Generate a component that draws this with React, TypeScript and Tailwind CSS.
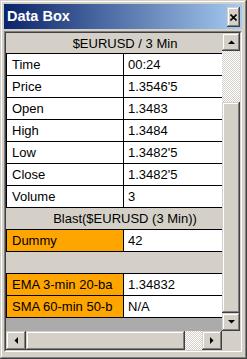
import type { ReactNode } from 'react';

const raised =
  'bg-[#d4d0c8] shadow-[inset_-1px_-1px_0_#404040,inset_1px_1px_0_#d4d0c8,inset_-2px_-2px_0_#808080,inset_2px_2px_0_#ffffff]';
const checker =
  'bg-[repeating-conic-gradient(#d4d0c8_0_25%,#ffffff_0_50%)] bg-[length:2px_2px]';

type Linha = { label: string; value: string; hl?: boolean };

const barra: Linha[] = [
  { label: 'Time', value: '00:24' },
  { label: 'Price', value: "1.3546'5" },
  { label: 'Open', value: '1.3483' },
  { label: 'High', value: '1.3484' },
  { label: 'Low', value: "1.3482'5" },
  { label: 'Close', value: "1.3482'5" },
  { label: 'Volume', value: '3' },
];

const Row = ({ label, value, hl }: Linha) => (
  <div className="flex h-[22px] shrink-0 border-t border-black">
    <div
      className={`flex w-[117px] shrink-0 items-center border-l border-black pl-[5px] ${hl ? 'bg-[#ffa500]' : 'bg-white'}`}
    >
      {label}
    </div>
    <div className="flex flex-1 items-center border-l border-black bg-white pl-[4px]">{value}</div>
  </div>
);

const Header = ({ children, top }: { children: ReactNode; top?: boolean }) => (
  <div
    className={`flex shrink-0 items-center justify-center bg-[#d4d0c8] pl-[22px] ${top ? 'h-[20px]' : 'h-[22px] border-t border-black'}`}
  >
    {children}
  </div>
);

const Arrow = ({ dir }: { dir: 'up' | 'down' | 'left' | 'right' }) => {
  const pts = {
    up: '0,4 7,4 3.5,0.5',
    down: '0,0 7,0 3.5,3.5',
    left: '4,0 4,7 0.5,3.5',
    right: '0,0 0,7 3.5,3.5',
  }[dir];
  const vert = dir === 'up' || dir === 'down';
  return (
    <svg width={vert ? 7 : 4} height={vert ? 4 : 7} viewBox={vert ? '0 0 7 4' : '0 0 4 7'}>
      <polygon points={pts} fill="#000" />
    </svg>
  );
};

export default function App() {
  return (
    <div
      className={`flex h-[359px] w-[247px] flex-col pb-[7px] pl-[4px] pr-[5px] pt-[4px] ${raised}`}
      style={{ fontFamily: '"Liberation Sans", Arial, sans-serif' }}
    >
      {/* barra de titulo */}
      <div className="flex h-[25px] shrink-0 items-start justify-between bg-[linear-gradient(to_right,#0a246a,#a6caf0)]">
        <span className="mt-[3px] pl-[3px] text-[14.5px] font-bold leading-[18px] text-white">Data Box</span>
        <div className={`mr-[2px] mt-[3px] flex h-[20px] w-[13px] items-center justify-center ${raised}`}>
          <svg width="7" height="7" viewBox="0 0 7 7">
            <path d="M0.5 0.5 L6.5 6.5 M6.5 0.5 L0.5 6.5" stroke="#000" strokeWidth="1.6" />
          </svg>
        </div>
      </div>

      {/* painel */}
      <div className="mt-[2px] flex flex-1 flex-col border border-b-white border-l-[#808080] border-r-white border-t-[#808080]">
        <div className="flex flex-1 flex-col border border-b-[#d4d0c8] border-l-[#404040] border-r-[#d4d0c8] border-t-[#404040]">
          <div className="flex flex-1">
            <div className="flex flex-1 flex-col overflow-hidden text-[13px] leading-none text-black">
              <Header top>$EURUSD / 3 Min</Header>
              {barra.map((r) => (
                <Row key={r.label} {...r} />
              ))}
              <Header>Blast($EURUSD (3 Min))</Header>
              <Row label="Dummy" value="42" hl />
              <div className="h-[22px] shrink-0 border-t border-black bg-[#d4d0c8]" />
              <Row label="EMA 3-min 20-ba" value="1.34832" hl />
              <Row label="SMA 60-min 50-b" value="N/A" hl />
              <div className="flex-1 border-t border-black bg-[#ababab]" />
            </div>

            {/* scroll vertical */}
            <div className="flex w-[18px] shrink-0 flex-col">
              <div className={`flex h-[18px] shrink-0 items-center justify-center ${raised}`}>
                <Arrow dir="up" />
              </div>
              <div className={`h-[51px] shrink-0 ${checker}`} />
              <div className={`flex-1 ${raised}`} />
              <div className={`flex h-[18px] shrink-0 items-center justify-center ${raised}`}>
                <Arrow dir="down" />
              </div>
            </div>
          </div>

          {/* scroll horizontal */}
          <div className="flex h-[19px] shrink-0">
            <div className={`flex w-[20px] shrink-0 items-center justify-center ${raised}`}>
              <Arrow dir="left" />
            </div>
            <div className={`w-[159px] shrink-0 ${raised}`} />
            <div className={`flex-1 ${checker}`} />
            <div className={`flex w-[20px] shrink-0 items-center justify-center ${raised}`}>
              <Arrow dir="right" />
            </div>
            <div className="w-[18px] shrink-0 bg-[#d4d0c8]" />
          </div>
        </div>
      </div>
    </div>
  );
}
